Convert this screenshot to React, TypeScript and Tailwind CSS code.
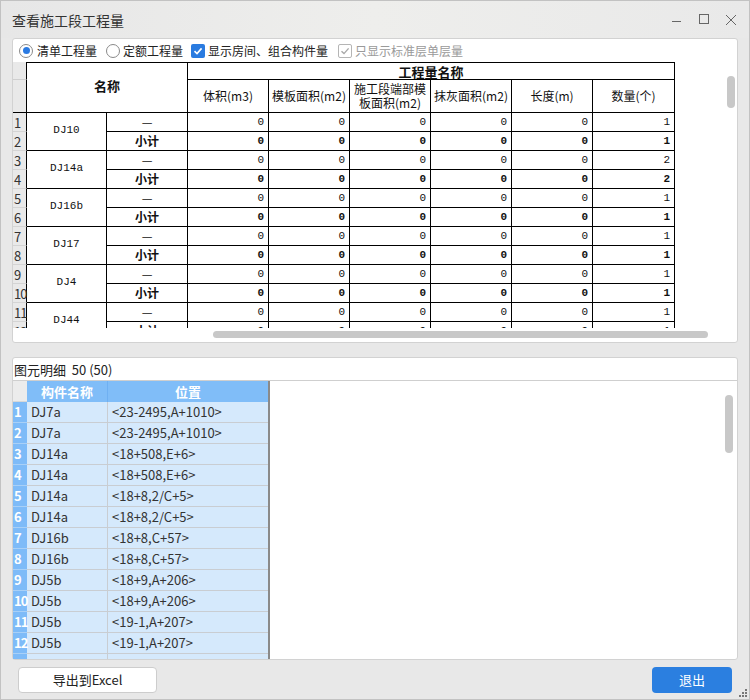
import { Fragment } from "react"

const topItems = [
  { name: "DJ10", qty: 1 },
  { name: "DJ14a", qty: 2 },
  { name: "DJ16b", qty: 1 },
  { name: "DJ17", qty: 1 },
  { name: "DJ4", qty: 1 },
  { name: "DJ44", qty: 1 },
  { name: "DJ5b", qty: 4 },
]

const detailRows = [
  ["DJ7a", "<23-2495,A+1010>"],
  ["DJ7a", "<23-2495,A+1010>"],
  ["DJ14a", "<18+508,E+6>"],
  ["DJ14a", "<18+508,E+6>"],
  ["DJ14a", "<18+8,2/C+5>"],
  ["DJ14a", "<18+8,2/C+5>"],
  ["DJ16b", "<18+8,C+57>"],
  ["DJ16b", "<18+8,C+57>"],
  ["DJ5b", "<18+9,A+206>"],
  ["DJ5b", "<18+9,A+206>"],
  ["DJ5b", "<19-1,A+207>"],
  ["DJ5b", "<19-1,A+207>"],
  ["DJ5b", "<19-1,A+207>"],
]

const subHeaders = ["体积(m3)", "模板面积(m2)", "", "抹灰面积(m2)", "长度(m)", "数量(个)"]

const mono = "font-['Liberation_Mono','Noto_Sans_CJK_SC',monospace]"

function ValueRow({ label, qty, bold }: { label: string; qty: number; bold?: boolean }) {
  const values = [0, 0, 0, 0, 0, qty]
  return (
    <div className="flex h-[19px]">
      <div className={`flex w-[81px] items-center justify-center border-r border-b border-black text-[12px] leading-none ${bold ? "font-bold" : ""}`}>
        {label}
      </div>
      {values.map((v, i) => (
        <div
          key={i}
          className={`flex ${i === 5 ? "w-[82px]" : "w-[81px]"} items-center justify-end border-r border-b border-black pr-[4px] text-[11px] leading-none ${mono} ${bold ? "font-bold" : ""}`}
        >
          {v}
        </div>
      ))}
    </div>
  )
}

function TopTable() {
  return (
    <div className="flex flex-col text-[#111]">
      {/* header */}
      <div className="flex">
        <div className="flex w-[14px] flex-col bg-[#e9e9e9]">
          <div className="h-[18px] border-r border-b border-[#cfcfcf] border-r-black" />
          <div className="h-[33px] border-r border-b border-[#cfcfcf] border-r-black border-b-black" />
        </div>
        <div className="flex h-[51px] w-[161px] items-center justify-center border-t border-r border-b border-black pb-[4px] text-[13px] font-bold">
          名称
        </div>
        <div className="flex w-[487px] flex-col">
          <div className="flex h-[18px] items-center justify-center border-t border-r border-b border-black text-[13px] leading-none font-bold">
            工程量名称
          </div>
          <div className="flex h-[33px]">
            {subHeaders.map((h, i) => (
              <div
                key={i}
                className={`flex ${i === 5 ? "w-[82px]" : "w-[81px]"} items-center justify-center border-r border-b border-black text-center text-[12px] leading-[14px]`}
              >
                {i === 2 ? (
                  <span>
                    施工段端部模
                    <br />
                    板面积(m2)
                  </span>
                ) : (
                  h
                )}
              </div>
            ))}
          </div>
        </div>
      </div>
      {topItems.map((it, idx) => (
        <div key={it.name} className="flex h-[38px]">
          <div className="flex w-[14px] flex-col bg-[#e9e9e9] text-[13px] leading-[19px] text-[#333]">
            <div className="h-[19px] border-r border-b border-[#d4d4d4] border-r-black pl-[1px] tracking-[-1px]">{idx * 2 + 1}</div>
            <div className="h-[19px] border-r border-b border-[#d4d4d4] border-r-black pl-[1px] tracking-[-1px]">{idx * 2 + 2}</div>
          </div>
          <div className={`flex w-[80px] items-center justify-center border-r border-b border-black pb-[3px] text-[11px] ${mono}`}>
            {it.name}
          </div>
          <div className="flex flex-col">
            <ValueRow label="—" qty={it.qty} />
            <ValueRow label="小计" qty={it.qty} bold />
          </div>
        </div>
      ))}
    </div>
  )
}

function WindowButtons() {
  return (
    <div className="flex items-center pr-[5px] text-[#555]">
      <div className="flex h-[37px] w-[27px] items-center justify-center">
        <svg width="11" height="11" viewBox="0 0 11 11">
          <line x1="1" y1="7.5" x2="10" y2="7.5" stroke="#666" strokeWidth="1" />
        </svg>
      </div>
      <div className="flex h-[37px] w-[27px] items-center justify-center">
        <svg width="11" height="11" viewBox="0 0 11 11">
          <rect x="1.5" y="0.5" width="9" height="9" fill="none" stroke="#666" strokeWidth="1" />
        </svg>
      </div>
      <div className="flex h-[37px] w-[27px] items-center justify-center">
        <svg width="12" height="12" viewBox="0 0 12 12">
          <path d="M1 1 L11 11 M11 1 L1 11" stroke="#666" strokeWidth="1" />
        </svg>
      </div>
    </div>
  )
}

export default function App() {
  return (
    <div className="relative flex h-[700px] w-[750px] flex-col border border-[#c2c2c2] bg-[#e8e8e8] font-['Noto_Sans_CJK_SC','Noto_Sans',sans-serif] text-[#222]">
      {/* title bar */}
      <div className="flex h-[37px] items-center justify-between bg-gradient-to-r from-[#e7e7e7] via-[#eeeeec] to-[#e9e9e9]">
        <div className="pl-[11px] text-[14px] leading-none text-[#333]">查看施工段工程量</div>
        <WindowButtons />
      </div>

      {/* top panel */}
      <div className="mx-[11px] flex h-[305px] flex-col rounded-[3px] border border-[#d2d2d2] bg-white">
        <div className="flex h-[23px] items-center pl-[6px] text-[12px] leading-none">
          <span className="flex h-[14px] w-[14px] items-center justify-center rounded-full border border-[#8a8a8a] bg-white">
            <span className="h-[7px] w-[7px] rounded-full bg-[#2a7ae2]" />
          </span>
          <span className="ml-[4px] text-[#222]">清单工程量</span>
          <span className="ml-[9px] h-[14px] w-[14px] rounded-full border border-[#8a8a8a] bg-white" />
          <span className="ml-[3px] text-[#222]">定额工程量</span>
          <span className="ml-[8px] flex h-[14px] w-[14px] items-center justify-center rounded-[2px] bg-[#2a7be0]">
            <svg width="10" height="10" viewBox="0 0 10 10">
              <path d="M1.5 5.2 L4 7.6 L8.6 2.4" fill="none" stroke="white" strokeWidth="1.6" />
            </svg>
          </span>
          <span className="ml-[3px] text-[#222]">显示房间、组合构件量</span>
          <span className="ml-[10px] flex h-[14px] w-[14px] items-center justify-center rounded-[2px] border border-[#b5b5b5] bg-white">
            <svg width="10" height="10" viewBox="0 0 10 10">
              <path d="M1.5 5.2 L4 7.6 L8.6 2.4" fill="none" stroke="#a8a8a8" strokeWidth="1.4" />
            </svg>
          </span>
          <span className="ml-[3px] text-[#9a9a9a]">只显示标准层单层量</span>
        </div>
        <div className="relative h-[266px] overflow-hidden">
          <TopTable />
          <div className="absolute top-[14px] right-[2px] h-[32px] w-[8px] rounded-full bg-[#c8c8c8]" />
        </div>
        <div className="h-[14px] pt-[3px]">
          <div className="ml-[200px] h-[7px] w-[495px] rounded-full bg-[#c8c8c8]" />
        </div>
      </div>

      {/* bottom panel */}
      <div className="mx-[11px] mt-[14px] flex h-[303px] flex-col rounded-[3px] border border-[#d2d2d2] bg-white">
        <div className="flex h-[23px] shrink-0 items-center border-b border-[#cfcfcf] pl-[1px] text-[13px] leading-none text-[#222]">
          图元明细&nbsp;&nbsp;50 (50)
        </div>
        <div className="relative flex-1 overflow-hidden">
          <div className="flex w-[257px] flex-col border-r-2 border-[#8a8a8a] bg-[#d5e9fc] text-[13px]">
            <div className="flex h-[21px] leading-none">
              <div className="w-[14px] border-b border-[#d8d8d8] bg-[#ececec]" />
              <div className="flex w-[81px] items-center justify-center border-r border-[#6fb0f2] bg-[#80bdf8] font-bold text-white">
                构件名称
              </div>
              <div className="flex w-[160px] items-center justify-center bg-[#80bdf8] font-bold text-white">位置</div>
            </div>
            {detailRows.map((r, i) => (
              <Fragment key={i}>
                <div className="flex h-[21px] leading-[20px]">
                  <div className="w-[14px] border-b border-[#a9d0f7] bg-[#7ebbf8] pl-[1px] font-bold tracking-[-1px] text-white">
                    {i + 1}
                  </div>
                  <div className="w-[81px] border-r border-b border-[#c9cdd2] pl-[4px] text-[#333]">{r[0]}</div>
                  <div className="w-[160px] border-b border-[#c9cdd2] pl-[4px] text-[#333]">{r[1]}</div>
                </div>
              </Fragment>
            ))}
          </div>
          <div className="absolute top-[14px] right-[4px] h-[58px] w-[8px] rounded-full bg-[#c8c8c8]" />
        </div>
      </div>

      {/* footer */}
      <div className="mt-[7px] flex items-start justify-between px-[17px]">
        <button className="flex h-[26px] w-[139px] items-center justify-center rounded-[4px] border border-[#cdcdcd] bg-white text-[13px] text-[#222]">
          导出到Excel
        </button>
        <button className="flex h-[26px] w-[80px] items-center justify-center rounded-[4px] bg-[#2b7fe0] text-[13px] text-white">
          退出
        </button>
      </div>

      <svg className="absolute right-[1px] bottom-[1px]" width="10" height="10" viewBox="0 0 10 10">
        <rect x="7" y="1" width="2" height="2" fill="#777" />
        <rect x="4" y="4" width="2" height="2" fill="#777" />
        <rect x="7" y="4" width="2" height="2" fill="#777" />
        <rect x="1" y="7" width="2" height="2" fill="#777" />
        <rect x="4" y="7" width="2" height="2" fill="#777" />
        <rect x="7" y="7" width="2" height="2" fill="#777" />
      </svg>
    </div>
  )
}
